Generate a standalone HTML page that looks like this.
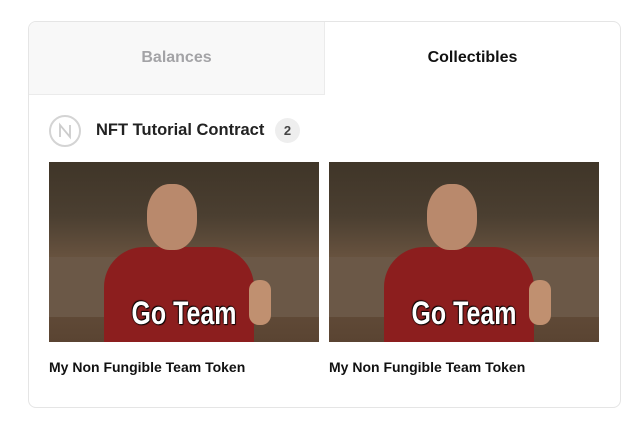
<!DOCTYPE html>
<html><head><style>
body{margin:0;width:635px;height:432px;background:#fff;font-family:"Liberation Sans",Arial,sans-serif;position:relative;overflow:hidden}
.card{position:absolute;left:28px;top:21px;width:593px;height:387px;border:1px solid #e5e5e5;border-radius:8px;overflow:hidden;box-sizing:border-box}
.tab{position:absolute;top:0;height:72px;line-height:72px;text-align:center;font-weight:bold;font-size:16px}
.t1{left:0;width:295px;background:#f8f8f8;color:#a3a3a6;border-right:1px solid #ebebeb;border-bottom:1px solid #ebebeb}
.t2{left:295px;width:297px;color:#111}
.icon{position:absolute;left:20px;top:93px;width:32px;height:32px;border:2px solid #d4d4d4;border-radius:50%;box-sizing:border-box}
.title{position:absolute;left:67px;top:99px;font-weight:bold;font-size:16.5px;color:#222}
.badge{position:absolute;left:246px;top:96px;width:25px;height:25px;border-radius:50%;background:#eeeeee;color:#444;font-weight:bold;font-size:13px;text-align:center;line-height:25px}
.img{position:absolute;top:140px;width:270px;height:180px;overflow:hidden;background:linear-gradient(#3f3528 0%,#4b3f31 30%,#6a5440 55%,#5a4432 100%)}
.cap{position:absolute;top:337px;font-weight:bold;font-size:14px;color:#111}
.gt{position:absolute;left:0;top:133px;width:270px;text-align:center;font:bold 32px 'Liberation Sans',sans-serif;color:#fff;transform:scaleX(0.78);text-shadow:0 0 2px #000,1px 1px 1px #000,-1px -1px 1px #000}
</style></head><body>
<div class="card">
<div class="tab t1">Balances</div>
<div class="tab t2">Collectibles</div>
<div class="icon"><svg width="28" height="28" viewBox="0 0 28 28"><path d="M9 20V8l10 12V8" fill="none" stroke="#ccc" stroke-width="1.8"/></svg></div>
<div class="title">NFT Tutorial Contract</div>
<div class="badge">2</div>
<div class="img" style="left:20px">
<div style="position:absolute;left:0;top:95px;width:270px;height:60px;background:#6b5847"></div>
<div style="position:absolute;left:55px;top:85px;width:150px;height:100px;background:#8c1e1e;border-radius:40px 40px 0 0"></div>
<div style="position:absolute;left:98px;top:22px;width:50px;height:66px;background:#b9896c;border-radius:45%"></div>
<div style="position:absolute;left:200px;top:118px;width:22px;height:45px;background:#c09070;border-radius:10px"></div>
<div class="gt">Go Team</div>
</div>
<div class="img" style="left:300px">
<div style="position:absolute;left:0;top:95px;width:271px;height:60px;background:#6b5847"></div>
<div style="position:absolute;left:55px;top:85px;width:150px;height:100px;background:#8c1e1e;border-radius:40px 40px 0 0"></div>
<div style="position:absolute;left:98px;top:22px;width:50px;height:66px;background:#b9896c;border-radius:45%"></div>
<div style="position:absolute;left:200px;top:118px;width:22px;height:45px;background:#c09070;border-radius:10px"></div>
<div class="gt">Go Team</div>
</div>
<div class="cap" style="left:20px">My Non Fungible Team Token</div>
<div class="cap" style="left:300px">My Non Fungible Team Token</div>
</div>
</body></html>
